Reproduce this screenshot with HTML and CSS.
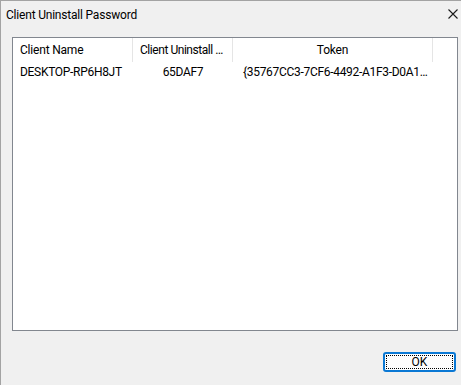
FILE: index.html
```
<!DOCTYPE html>
<html>
<head>
<meta charset="utf-8">
<link rel="stylesheet" href="styles.css">
</head>
<body>
<div class="window">
  <div class="titlebar">
    <span class="title">Client Uninstall Password</span>
    <svg class="close" width="10" height="10" viewBox="0 0 10 10"><path d="M0.5 0.5L9.5 9.5M9.5 0.5L0.5 9.5" stroke="#1a1a1a" stroke-width="1.1" fill="none"/></svg>
  </div>
  <div class="content">
    <div class="list">
      <div class="row header">
        <div class="cell c1">Client Name</div>
        <div class="cell c2 left tight">Client Uninstall …</div>
        <div class="cell c3 center">Token</div>
      </div>
      <div class="row">
        <div class="cell c1">DESKTOP-RP6H8JT</div>
        <div class="cell c2 center">65DAF7</div>
        <div class="cell c3 pad">{35767CC3-7CF6-4492-A1F3-D0A1…</div>
      </div>
    </div>
    <div class="footer">
      <button class="ok"><span class="focus">OK</span></button>
    </div>
  </div>
</div>
</body>
</html>
```
FILE: styles.css
```
html, body { margin: 0; padding: 0; }
body {
  background: #f0f0f0;
  font-family: Roboto, "Liberation Sans", sans-serif;
  font-size: 12px;
  color: #000;
}
.window {
  width: 461px;
  height: 385px;
  box-sizing: border-box;
  border-top: 1px solid #a3a3a3;
  border-left: 1px solid #a3a3a3;
  background: #f0f0f0;
  display: flex;
  flex-direction: column;
}
.titlebar {
  height: 30px;
  display: flex;
  align-items: center;
  padding-left: 5px;
  padding-right: 3px;
  box-sizing: border-box;
}
.title {
  flex: 1;
  font-size: 12px;
  letter-spacing: -0.2px;
  color: #000;
  padding-bottom: 2px;
}
.close {
  margin-top: -4px;
  margin-right: 0px;
}
.content {
  padding: 6px 3px 0 11px;
  display: flex;
  flex-direction: column;
}
.list {
  width: 446px;
  height: 294px;
  box-sizing: border-box;
  border: 1px solid #82878f;
  background: #fff;
}
.row {
  display: flex;
  height: 18px;
  align-items: center;
}
.row.header {
  height: 24px;
  margin-bottom: 1px;
}
.cell {
  white-space: nowrap;
  overflow: hidden;
  box-sizing: border-box;
  padding: 0 0 0 7px;
}
.header .cell {
  height: 24px;
  line-height: 24px;
  border-right: 1px solid #e5e5e5;
  letter-spacing: -0.2px;
}
.header .tight { letter-spacing: -0.45px; padding-left: 7px; }
.c1 { width: 120px; }
.c2 { width: 100px; }
.c3 { width: 200px; }
.center { text-align: center; padding-left: 0; }
.left { text-align: left; }
.pad { padding-left: 10px; }
.row:not(.header) .cell { letter-spacing: -0.3px; }
.footer {
  display: flex;
  justify-content: flex-end;
  padding-top: 21px;
  padding-right: 2px;
}
.ok {
  width: 73px;
  height: 20px;
  box-sizing: border-box;
  border: 2px solid #0a78d4;
  border-radius: 3px;
  background: #fdfdfd;
  padding: 1px;
  margin: 0;
  font-family: Roboto, "Liberation Sans", sans-serif;
  font-size: 12px;
  color: #000;
  display: flex;
}
.focus {
  flex: 1;
  border: 1px dotted #000;
  display: flex;
  align-items: center;
  justify-content: center;
  line-height: 12px;
}
```
